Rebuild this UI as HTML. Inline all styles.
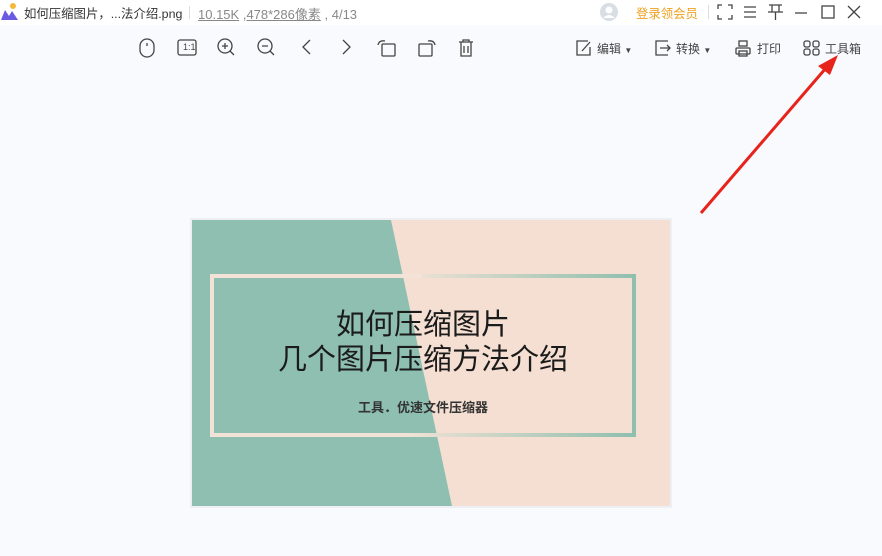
<!DOCTYPE html>
<html><head><meta charset="utf-8"><style>
body{margin:0;width:882px;height:556px;background:#f9fafd;font-family:"Liberation Sans","Noto Sans CJK SC",sans-serif;position:relative;overflow:hidden}
.t{position:absolute;white-space:nowrap}
svg{position:absolute}
</style></head><body>
<div style="position:absolute;left:0;top:0;width:882px;height:25px;background:#fff"></div>
<svg style="left:0;top:2px" width="20" height="20"><circle cx="13" cy="4" r="3" fill="#f5b93a"/><path d="M1 18 L5 8 L9 14 L12 9 L18 18Z" fill="#6a5be0"/></svg>
<div class="t" style="left:24px;top:4px;font-size:12.4px;color:#333">如何压缩图片，...法介绍.png</div>
<div style="position:absolute;left:189px;top:6px;width:1px;height:13px;background:#ddd"></div>
<div class="t" style="left:198px;top:4px;font-size:13px;color:#888"><u>10.15K</u> ,<u>478*286像素</u> , 4/13</div>
<svg style="left:598px;top:2px" width="22" height="20"><circle cx="11" cy="10" r="9" fill="#d9dde4"/><circle cx="11" cy="8" r="3.5" fill="#fff"/><path d="M5 16 Q11 10 17 16" fill="#fff"/></svg>
<div class="t" style="left:636px;top:4px;font-size:12.4px;color:#f0a020">登录领会员</div>
<div style="position:absolute;left:708px;top:5px;width:1px;height:14px;background:#ddd"></div>
<svg style="left:716px;top:3px" width="150" height="18" fill="none" stroke="#444" stroke-width="1.3">
<path d="M2 6V2H6M12 2H16V6M2 12V16H6M16 12V16H12"/>
<path d="M28 4H40M28 9H40M28 14H40"/>
<path d="M53 2H66M56 2V9H63V2M52 9H67M59.5 9V17"/>
<path d="M79 10H91"/>
<rect x="106" y="3" width="12" height="12"/>
<path d="M132 3L144 15M144 3L132 15"/>
</svg>
<svg style="left:136px;top:37px" width="340" height="22" fill="none" stroke="#444" stroke-width="1.3">
<rect x="4" y="2" width="14" height="18" rx="7"/><path d="M11 6V9"/>
<rect x="42" y="3" width="18" height="15" rx="2"/>
<circle cx="89" cy="9" r="7"/><path d="M94 14L98 18M86 9H92M89 6V12"/>
<circle cx="129" cy="9" r="7"/><path d="M134 14L138 18M126 9H132"/>
<path d="M174 3L167 10L174 17"/>
<path d="M207 3L214 10L207 17"/>
<rect x="246" y="7" width="13" height="12" rx="1"/><path d="M242 8Q243 3 249 4"/>
<rect x="283" y="7" width="13" height="12" rx="1"/><path d="M299 8Q298 3 292 4"/>
<path d="M323 5H337M327 5V3H333V5M325 5V19H335V5M328 9V16M332 9V16"/>
</svg>
<div class="t" style="left:183px;top:42px;font-size:9px;color:#444">1:1</div>
<svg style="left:574px;top:38px" width="300" height="20" fill="none" stroke="#444" stroke-width="1.3">
<path d="M14 3H3V17H16V9M8 13L16 4"/>
<path d="M94 3H82V17H94M86 10H96M93 7L96 10L93 13"/>
<rect x="162" y="10" width="14" height="6" rx="1"/><rect x="165" y="3" width="8" height="5"/><rect x="165" y="13" width="8" height="5"/>
<rect x="230" y="3" width="6" height="6" rx="2"/><rect x="239" y="3" width="6" height="6" rx="2"/><rect x="230" y="11" width="6" height="6" rx="2"/><rect x="239" y="11" width="6" height="6" rx="2"/>
</svg>
<div class="t" style="left:597px;top:40px;font-size:12px;color:#444">编辑 <span style="font-size:8px">▼</span></div>
<div class="t" style="left:676px;top:40px;font-size:12px;color:#444">转换 <span style="font-size:8px">▼</span></div>
<div class="t" style="left:757px;top:40px;font-size:12px;color:#444">打印</div>
<div class="t" style="left:825px;top:40px;font-size:12px;color:#444">工具箱</div>
<svg style="left:0;top:0" width="882" height="556"><path d="M701 213L826 68" stroke="#e8231b" stroke-width="3"/><path d="M838 55L818 66L830 75Z" fill="#e8231b"/></svg>
<div style="position:absolute;left:190px;top:218px;width:482px;height:290px;background:#eeeff2"></div>
<svg style="left:192px;top:220px" width="478" height="286">
<defs><linearGradient id="g" x1="0" x2="1"><stop offset="0.45" stop-color="#f2e3d6"/><stop offset="1" stop-color="#8fbfae"/></linearGradient></defs>
<rect width="478" height="286" fill="#f4dfd2"/>
<path d="M0 0H199L260 286H0Z" fill="#8ebfb0"/>
<rect x="20" y="56" width="422" height="159" fill="none" stroke="url(#g)" stroke-width="4"/>
<path d="M20 56H230M20 56V215" stroke="#f2e3d6" stroke-width="4" fill="none"/>
<text x="231" y="114" font-size="29" text-anchor="middle" fill="#1b1b1b" font-family="Noto Sans CJK SC,sans-serif">如何压缩图片</text>
<text x="231" y="149" font-size="29" text-anchor="middle" fill="#1b1b1b" font-family="Noto Sans CJK SC,sans-serif">几个图片压缩方法介绍</text>
<text x="231" y="192" font-size="13" font-weight="bold" text-anchor="middle" fill="#333" font-family="Noto Sans CJK SC,sans-serif">工具．优速文件压缩器</text>
</svg>
</body></html>
